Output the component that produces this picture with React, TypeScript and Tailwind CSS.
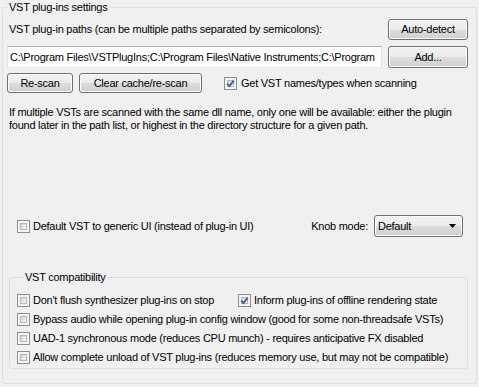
import React from "react";

const btn =
  "flex items-center justify-center rounded-[3px] border border-[#707070] bg-[linear-gradient(#f2f2f2,#ebebeb_50%,#dddddd_51%,#cfcfcf)] shadow-[inset_0_0_0_1px_#fcfcfc] text-black";

function Check({ checked = false }: { checked?: boolean }) {
  return (
    <span className="relative flex h-[13px] w-[13px] shrink-0 border border-[#8e8f8f] bg-[#f4f4f4] p-[2px]">
      <span className="h-full w-full border border-[#b4b9bf] bg-[linear-gradient(135deg,#d0d4d9,#f6f6f6)]" />
      {checked && (
        <svg
          className="absolute left-0 top-0"
          width="11"
          height="11"
          viewBox="0 0 11 11"
        >
          <path
            d="M2.2 5.6 L4.4 8 L8.8 2.6"
            fill="none"
            stroke="#4a5d98"
            strokeWidth="1.9"
          />
        </svg>
      )}
    </span>
  );
}

function CheckRow({
  label,
  checked,
  className = "",
}: {
  label: string;
  checked?: boolean;
  className?: string;
}) {
  return (
    <div className={`flex items-center gap-[3px] ${className}`}>
      <Check checked={checked} />
      <span className="whitespace-nowrap">{label}</span>
    </div>
  );
}

export default function App() {
  return (
    <div
      className="h-[387px] w-[479px] overflow-hidden bg-[#f0f0f0] text-[11px] leading-[13px] tracking-[-0.25px] text-black"
      style={{ fontFamily: '"Liberation Sans", Arial, sans-serif' }}
    >
      {/* VST plug-ins settings */}
      <fieldset className="mx-[2px] h-[384px] min-w-0 rounded-[3px] border border-[#d5dfe5]">
        <legend className="ml-[4px] px-[2px] leading-[14px]">VST plug-ins settings</legend>

        <div className="mt-[5px] flex h-[21px] items-center pl-[6px] pr-[8px]">
          <span className="flex-1">
            VST plug-in paths (can be multiple paths separated by semicolons):
          </span>
          <div className={`${btn} h-[21px] w-[80px]`}>Auto-detect</div>
        </div>

        <div className="mt-[6px] flex h-[22px] items-center gap-[6px] pl-[4px] pr-[8px]">
          <div className="flex h-[22px] min-w-0 flex-1 items-center overflow-hidden whitespace-nowrap border border-[#abadb3] border-b-[#e3e9ef] border-l-[#e2e3ea] border-r-[#dbdfe6] bg-white pl-[2px]">
            C:\Program Files\VSTPlugIns;C:\Program Files\Native Instruments;C:\Program
          </div>
          <div className={`${btn} h-[22px] w-[80px] shrink-0`}>Add...</div>
        </div>

        <div className="mt-[5px] flex h-[20px] items-center pl-[4px]">
          <div className={`${btn} h-[20px] w-[66px]`}>Re-scan</div>
          <div className={`${btn} ml-[6px] h-[20px] w-[123px]`}>Clear cache/re-scan</div>
          <CheckRow className="ml-[22px] gap-[4px]" checked label="Get VST names/types when scanning" />
        </div>

        <p className="mt-[13px] pl-[6px] pr-[12px]">
          If multiple VSTs are scanned with the same dll name, only one will be available: either the plugin found later in the path list, or highest in the directory structure for a given path.
        </p>

        <div className="mt-[83px] flex h-[22px] items-center pl-[14px] pr-[13px]">
          <CheckRow className="flex-1" label="Default VST to generic UI (instead of plug-in UI)" />
          <span className="mr-[6px]">Knob mode:</span>
          <div className="relative flex h-[22px] w-[89px] items-center rounded-[3px] border border-[#707070] bg-[linear-gradient(#f2f2f2,#ebebeb_50%,#dddddd_51%,#cfcfcf)] pl-[3px] shadow-[inset_0_0_0_1px_#fcfcfc]">
            Default
            <svg className="absolute right-[6px] top-[8px]" width="7" height="4" viewBox="0 0 7 4">
              <path d="M0 0 H7 L3.5 4 Z" fill="#000" />
            </svg>
          </div>
        </div>

        {/* VST compatibility */}
        <fieldset className="ml-[6px] mr-[8px] mt-[33px] min-w-0 rounded-[3px] border border-[#d5dfe5] pb-[1px] pl-[7px]">
          <legend className="ml-[6px] px-[2px] leading-[14px]">VST compatibility</legend>
          <div className="mt-[7px] flex h-[19px] items-center">
            <CheckRow className="w-[221px]" label="Don't flush synthesizer plug-ins on stop" />
            <CheckRow checked label="Inform plug-ins of offline rendering state" />
          </div>
          <CheckRow className="h-[19px]" label="Bypass audio while opening plug-in config window (good for some non-threadsafe VSTs)" />
          <CheckRow className="h-[19px]" label="UAD-1 synchronous mode (reduces CPU munch) - requires anticipative FX disabled" />
          <CheckRow className="h-[19px]" label="Allow complete unload of VST plug-ins (reduces memory use, but may not be compatible)" />
        </fieldset>
      </fieldset>
    </div>
  );
}
